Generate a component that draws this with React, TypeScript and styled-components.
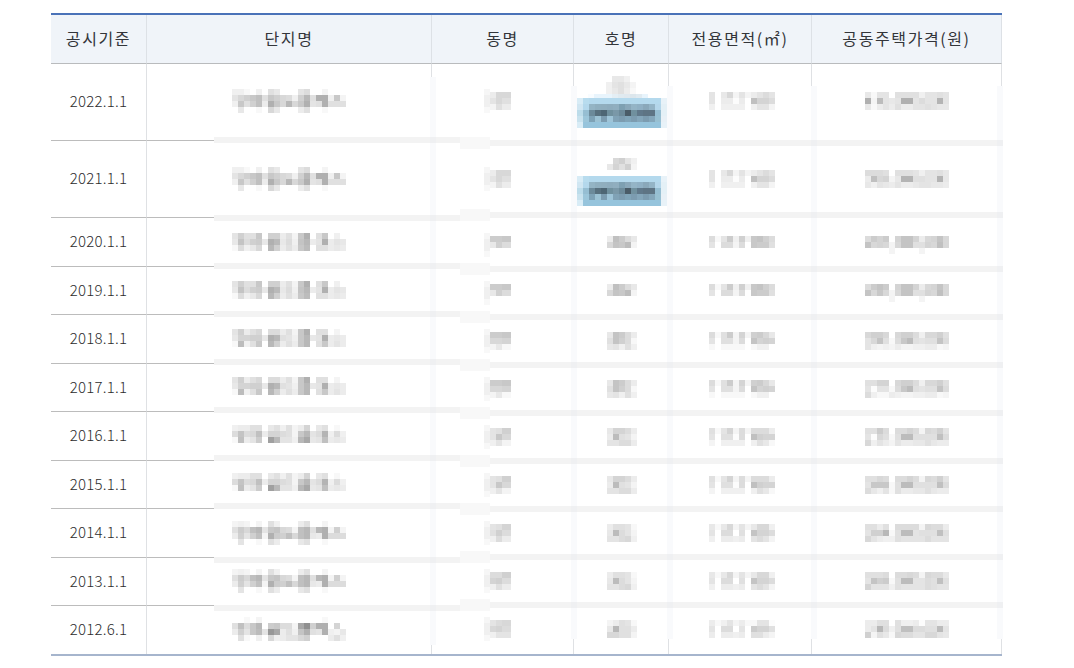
import React from "react";
import styled, { createGlobalStyle } from "styled-components";

const Global = createGlobalStyle`
  html, body { margin: 0; padding: 0; background: #fff; overflow: hidden; }
  body { font-family: "Noto Sans CJK KR", "Liberation Sans", sans-serif; }
`;

const Page = styled.div`
  position: relative;
  width: 1074px;
  height: 668px;
  padding: 13px 0 0 51px;
  box-sizing: border-box;
`;

const Table = styled.table`
  width: 951px;
  table-layout: fixed;
  border-collapse: separate;
  border-spacing: 0;
  border-top: 2px solid #4a72b8;
  border-bottom: 2px solid #a6b5cd;
`;

const HeadCell = styled.th`
  height: 49px;
  box-sizing: border-box;
  padding: 0 0 3px;
  background: #f0f4f9;
  border-right: 1px solid #dde1e6;
  border-bottom: 1px solid #b9bbbd;
  font-family: "Noto Sans CJK KR", sans-serif;
  font-size: 16px;
  font-weight: 400;
  letter-spacing: 1.6px;
  color: #33353a;
  text-align: center;
`;

const Row = styled.tr<{ $h: number }>`
  height: ${(p) => p.$h}px;
`;

const Cell = styled.td<{ $last: boolean }>`
  box-sizing: border-box;
  padding: 0 0 3px;
  border-right: 1px solid #dfe1e4;
  border-bottom: ${(p) => (p.$last ? "none" : "1px solid #bcbcbc")};
  text-align: center;
  font-family: "Noto Sans CJK KR", sans-serif;
  font-size: 15px;
  font-weight: 300;
  letter-spacing: 0.2px;
  color: #2c2c2c;
`;

const Redaction = styled.svg`
  position: absolute;
  left: 0;
  top: 0;
  pointer-events: none;
`;

const CELL = 6;

type Block = { x: number; y: number; w?: number; rows: string[] };

const toColor = (t: string) => (t.length === 2 ? `#${t}${t}${t}` : `#${t}`);

const Mosaic = ({ x, y, w, rows }: Block) => {
  const parsed = rows.map((r) => r.split(" "));
  const cols = Math.max(...parsed.map((r) => r.length));
  return (
    <svg x={x} y={y} width={w ?? cols * CELL} height={rows.length * CELL}>
      {parsed.flatMap((r, j) =>
        r.map((t, i) =>
          t === "." ? null : (
            <rect key={`${i}-${j}`} x={i * CELL} y={j * CELL} width={CELL} height={CELL} fill={toColor(t)} />
          )
        )
      )}
    </svg>
  );
};

const columns = [96, 285, 142, 95, 143, 190];
const headers = ["공시기준", "단지명", "동명", "호명", "전용면적(㎡)", "공동주택가격(원)"];
const dates: [string, number][] = [
  ["2022.1.1", 77],
  ["2021.1.1", 77],
  ["2020.1.1", 49],
  ["2019.1.1", 48],
  ["2018.1.1", 49],
  ["2017.1.1", 48],
  ["2016.1.1", 49],
  ["2015.1.1", 48],
  ["2014.1.1", 49],
  ["2013.1.1", 48],
  ["2012.6.1", 48],
];

const nameA = [
  "f0 f0 f8 . f0 . e0 e8 . . . e4 dc . . f4 . . .",
  "e4 d8 d0 c8 c0 e0 c8 d0 d8 dc f0 d0 b8 e0 b0 b0 f0 c8 f4",
  "f0 c8 e0 d0 c0 ec b0 c8 d8 b8 d8 c8 b0 e4 e0 b0 e0 e0 e0",
  ". e8 . . f8 . d8 e8 . . . ec e0 . . f8 . . .",
];
const nameB = [
  "e4 d0 e0 e0 c8 . d0 d0 ec e0 f4 c8 b0 . e0 c8 . f0 .",
  "e8 c4 dc d0 cc e8 b0 ba e8 dc f0 c4 b8 ec e4 b0 ec e4 e8",
  "f8 dc f0 e8 d8 . b8 d0 ec e0 ec c8 bc . e0 e0 ec e8 ec",
];
const nameC = [
  "e4 d0 ec e0 d8 . dc dc ec e0 f4 c8 b0 . e0 e0 . f4 .",
  "e8 d4 d4 d0 d0 e8 b0 b8 e0 e4 f0 c8 b8 e8 e4 b0 ec e8 ec",
  "f8 bc f0 e0 c8 . b8 d0 ec e0 ec c8 b8 . e0 c8 ec e4 ec",
];
const nameD = [
  "f0 ec ec e0 e0 . e8 e0 f0 e0 f4 ec d4 . e8 e0 . f8 .",
  "dc c4 dc d8 c0 ec d4 d4 dc e0 f4 c8 b8 e4 dc b4 f0 dc f0",
  "f8 c0 ec e4 cc . a0 b8 e4 e4 f0 b8 a8 e8 e4 c0 ec e8 ec",
];
const nameE = [
  "f4 f0 f4 . f4 . e0 f0 . . . ec e0 . . f4 . . .",
  "e0 cc d8 c0 b8 e4 c8 c4 d8 dc f4 c0 b8 e0 b8 b0 f4 d0 f4",
  "ec d0 e4 d0 c0 f4 b0 cc d0 c0 d8 c0 b8 e8 ec b0 dc dc dc",
  ". e4 . . f8 . e0 ec . . . e8 e0 . . f8 . . .",
];
const nameF = [
  ". . f8 . f4 . . . . . . . . . . f8 . . .",
  "e0 c0 dc c8 b8 . cc c8 dc dc f4 a8 90 d0 b0 b0 . d4 .",
  "ec d0 e4 c8 bc e4 98 a8 ec e0 f0 c4 b0 e0 e4 b0 f0 f4 e8",
  ". e0 f8 . f0 . d8 f0 ec e4 e4 d8 d0 . . . ec e0 f0",
];

const area1 = [
  "e4 . e8 d8 f4 e4 f4 ec e4 dc e4",
  "e4 . ec ec fc ec . c0 d4 d4 dc",
  "f0 . f0 f0 f0 f0 . f0 e4 e4 f4",
];
const area3 = ["dc f8 e4 cc f0 d0 f0 c8 c4 d0 dc", "e4 . dc dc f4 dc . c8 cc cc e0"];
const area5 = [
  "dc f8 e0 cc f4 d4 f4 d0 cc d8 e8",
  "e4 . e0 e0 f4 dc . c4 d4 d0 d4",
  "f8 . f8 f8 f8 f8 . f8 f0 f0 .",
];
const area7 = [
  "e0 f8 e4 d4 f4 dc f4 dc dc dc ec",
  "e4 . e0 e0 fc dc . c0 d0 d4 d4",
  "f4 . f0 f0 f0 f0 . f0 e0 e8 f8",
];
const area9 = [
  "e8 f8 e8 d8 f4 e4 f4 e8 d8 d8 f0",
  "e4 . dc dc . e0 . c4 d4 d4 dc",
  "f0 . ec ec f0 ec . e4 dc e4 f4",
];
const area11 = [
  "ec f8 f0 e4 f4 ec f8 f8 e4 e4 fc",
  "e4 . dc dc . e4 . cc d4 d4 e0",
  "ec . ec ec f0 ec . e0 e0 ec f4",
];

const ho3 = ["ec c0 cc dc e8", "d8 c4 c8 bc f4"];
const ho5 = ["e8 c4 cc dc ec", "e0 c4 d0 dc f8", "e8 e4 f0 e0 f0"];
const ho7 = ["e8 d4 d4 dc ec", "ec bc e0 e4 f4", "e4 e4 dc dc ec"];
const ho9 = ["ec e0 e0 e4 f8", "e8 bc dc e4 f4", "e4 e4 dc d8 f0"];
const ho11 = ["f4 ec e0 e4 f8", "e8 b8 e0 e0 ec", "d8 d8 e0 e0 f4"];

const blue = [
  "d8ecf6 b8dcee b4d9ed b4d9ed b4d9ed b4d9ed b4d9ed b4d9ed b4d9ed b4d9ed b4d9ed b4d9ed b4d9ed b4d9ed e8f2f8",
  "d0e6f2 b4d8ec 94b4c4 90afbf 90aebe 8eacbd 90aebf 7ea0b2 8aa8ba 94b4c6 90b0c4 8aa8ba 94b4c6 b4d6ea e4f0f6",
  "bcdcea 96bed2 6c8a9a 58707e 4e6674 70909e 7a98a8 6c8a9a 4a5c68 70909e 60788a 5e7484 5e7484 96bed2 e4f0f6",
  "c8e2ee 9cc6da 7ea2b6 9cc2d4 7c9cb0 9ec4d8 80a2b6 7c9cb0 80a4b8 7c9cb0 84a6ba 7c9cb0 84a6ba 98c0d2 e8f0f6",
  "d8ecf6 96c4dc 96c4dc 96c4dc 96c4dc 96c4dc 96c4dc 96c4dc 96c4dc 96c4dc 96c4dc 96c4dc 96c4dc 96c4dc e8f2f8",
];
const blueTop = [
  "f8fcff e8f4fc e8f4fc e8f4fc e4eef4 e0eaf0 e0e8ee dce6ec e0eaf0 e8f4fc",
];

const dongRows: [number, string[]][] = [
  [92, ["ec d8 d8 d8", "e4 d8 e0 e0", "f4 e0 ec ec"]],
  [170, ["ec d8 d8 d8", "e4 d8 e0 e0", "f4 e0 ec ec"]],
  [236, ["cc cc c8 c8", "e8 d0 dc dc"]],
  [284, ["cc cc c8 c8", "e8 d0 dc dc"]],
  [332, ["cc cc c8 c8", "d8 d8 d4 d4", "f4 e8 f8 f8"]],
  [380, ["cc cc c8 c8", "d8 d8 d4 d4", "f4 e8 f8 f8"]],
  [428, ["e4 e0 d0 d0", "e4 c8 d8 d8", "f0 e4 f4 f4"]],
  [476, ["e4 e0 d0 d0", "e4 c8 d8 d8", "f0 e4 f4 f4"]],
  [524, ["e4 e0 d4 d4", "e0 d0 dc dc", "f0 dc ec ec"]],
  [572, ["dc dc d0 d0", "d4 d0 dc dc", "f0 e0 ec ec"]],
  [620, ["e4 dc d8 d8", "d8 d4 dc dc", "f0 e4 e4 e4"]],
];

const blocks: Block[] = [
  { x: 232, y: 89, rows: nameA },
  { x: 232, y: 167, rows: nameA },
  { x: 232, y: 233, rows: nameB },
  { x: 232, y: 281, rows: nameB },
  { x: 232, y: 329, rows: nameC },
  { x: 232, y: 377, rows: nameC },
  { x: 232, y: 425, rows: nameD },
  { x: 232, y: 473, rows: nameD },
  { x: 232, y: 521, rows: nameE },
  { x: 232, y: 569, rows: nameE },
  { x: 232, y: 617, rows: nameF },

  ...dongRows.flatMap(([y, rows]): Block[] => [
    { x: 484, y: y - 3, rows: ["f6", "f0", "f0", "f8"] },
    { x: 490, y, w: 21, rows },
  ]),

  { x: 709, y: 92, rows: area1 },
  { x: 709, y: 170, rows: area1 },
  { x: 709, y: 236, rows: area3 },
  { x: 709, y: 284, rows: area3 },
  { x: 709, y: 332, rows: area5 },
  { x: 709, y: 380, rows: area5 },
  { x: 709, y: 428, rows: area7 },
  { x: 709, y: 476, rows: area7 },
  { x: 709, y: 524, rows: area9 },
  { x: 709, y: 572, rows: area9 },
  { x: 709, y: 620, rows: area11 },

  { x: 865, y: 92, rows: ["e8 f8 e4 e4 . e0 e0 e0 e0 f0 e4 e4 e0 e4", "b0 f4 bc e4 e8 e4 b0 b0 e4 dc e4 e4 b4 e4", "e8 f8 ec e4 ec e0 ec ec e4 e4 e0 e4 e8 e8"] },
  { x: 865, y: 170, rows: ["dc dc dc e0 . e0 e0 e0 e4 f0 e4 e4 e0 e8", "ec c0 d8 d4 f4 e8 b4 b4 e0 e0 e4 e4 b4 e8", "e8 f0 e4 e8 ec e4 ec ec e8 e4 e4 e8 e8 ec"] },
  { x: 865, y: 236, rows: ["dc cc d4 cc . d4 c4 c4 d4 ec d8 d4 c4 d8", "c4 d8 d4 d8 f4 d8 c4 c4 e0 e0 d4 d8 c0 d8", ". . . . f4 . . . . f4 . . . ."] },
  { x: 865, y: 284, rows: ["dc cc c4 cc . d4 c4 c4 d4 ec d8 d4 c4 d8", "c4 d8 c8 d8 f4 d8 c4 c4 e0 e0 d4 d8 c0 d8", ". . . . f4 . . . . f4 . . . ."] },
  { x: 865, y: 332, rows: ["d8 d0 d0 d8 . d8 d0 d0 dc f0 d8 d8 d0 e0", "e4 d8 c4 e0 f8 dc c8 bc e0 e4 e0 e0 c4 dc", "e4 f0 f4 f0 f4 ec f4 f4 f0 f0 ec ec f8 f4"] },
  { x: 865, y: 380, rows: ["e0 e0 d4 d4 . d8 d0 d0 dc f0 d8 d8 d0 e0", "e4 fc e4 e4 f8 dc c8 bc e0 e4 e0 e0 c4 dc", "dc f0 f8 f8 ec f0 f4 f4 f0 f0 ec ec f8 f4"] },
  { x: 865, y: 428, rows: ["e0 e0 cc dc . dc dc d4 dc f4 d8 dc d0 e4", "e4 fc d8 e0 f8 e0 bc bc e0 e0 e0 e0 c0 dc", "d8 f0 e4 ec f4 e4 ec ec e8 e8 e0 e8 ec ec"] },
  { x: 865, y: 476, rows: ["e0 e0 d8 dc . dc dc d4 dc f4 d8 dc d0 e4", "e4 c8 c8 c8 f8 e0 bc bc e0 e0 e0 e0 c0 dc", "dc e8 f0 e4 f8 e0 ec ec e8 e8 e0 e8 ec ec"] },
  { x: 865, y: 524, rows: ["e0 e0 ec e0 . dc dc dc dc f4 d8 dc dc ec", "e4 d0 d0 b8 f8 e0 bc bc e4 e0 e0 e0 c0 e0", "d8 e4 ec f0 f0 e0 e4 e4 e4 e4 dc e4 e4 e4"] },
  { x: 865, y: 572, rows: ["e0 e0 e0 dc . dc dc d8 dc f4 d8 dc dc e8", "e4 c4 d0 cc f8 e0 bc bc e4 e4 dc e0 c0 e0", "d4 e4 e4 e4 f0 e0 e4 e4 e4 e4 dc e0 e4 e4"] },
  { x: 865, y: 620, rows: ["ec ec e0 e0 . e0 f0 f0 ec fc e4 e4 ec ec", "ec e4 b8 dc f0 e0 c0 c0 dc dc e0 e0 bc e4", "d0 f4 e0 e8 f8 d8 dc dc e4 e4 d8 d8 e4 e8"] },

  { x: 607, y: 236, rows: ho3 },
  { x: 607, y: 284, rows: ho3 },
  { x: 607, y: 332, rows: ho5 },
  { x: 607, y: 380, rows: ho5 },
  { x: 607, y: 428, rows: ho7 },
  { x: 607, y: 476, rows: ho7 },
  { x: 607, y: 524, rows: ho9 },
  { x: 607, y: 572, rows: ho9 },
  { x: 607, y: 620, rows: ho11 },
];

const leftBands = [137, 215, 263, 311, 359, 407, 455, 503, 557, 605];
const rightBands = [140, 212, 266, 314, 362, 410, 458, 506, 554, 602];
const verticals: [number, number, number][] = [
  [430, 77, 645],
  [571, 86, 639],
  [667, 86, 639],
  [811, 86, 639],
  [997, 86, 639],
];

const GridVeil = () => (
  <>
    {verticals.map(([x, y1, y2]) => (
      <rect key={x} x={x} y={y1} width={6} height={y2 - y1} fill="#f9fafc" />
    ))}
    {leftBands.map((y) => (
      <rect key={`l${y}`} x={214} y={y} width={246} height={6} fill="#f3f3f3" />
    ))}
    {leftBands.map((y) => (
      <rect key={`c${y}`} x={430} y={y} width={6} height={6} fill="#eff0f2" />
    ))}
    {rightBands.map((y) => (
      <rect key={`p${y}`} x={460} y={y - 3} width={30} height={12} fill="#f8f8f8" />
    ))}
    {rightBands.map((y) => (
      <rect key={`r${y}`} x={490} y={y} width={513} height={6} fill="#f3f3f3" />
    ))}
    {rightBands.flatMap((y) =>
      verticals.slice(1).map(([x]) => <rect key={`x${x}-${y}`} x={x} y={y} width={6} height={6} fill="#eff0f2" />)
    )}
  </>
);

const HoHighlights = () => (
  <>
    <Mosaic x={606} y={76} rows={[". e8 e8 f0 .", "f0 e4 e0 e8 f4", "f0 e8 e0 ec f8"]} />
    <Mosaic x={588} y={94} w={60} rows={blueTop} />
    <Mosaic x={577} y={98} rows={blue} />
    <Mosaic x={607} y={158} rows={[". d8 d0 e4 f0", "e8 d4 e0 d0 f4"]} />
    <Mosaic x={577} y={176} rows={blue} />
  </>
);

export default function App() {
  return (
    <Page>
      <Global />
      <Table>
        <colgroup>
          {columns.map((w, i) => (
            <col key={i} style={{ width: w }} />
          ))}
        </colgroup>
        <thead>
          <tr>
            {headers.map((h) => (
              <HeadCell key={h}>{h}</HeadCell>
            ))}
          </tr>
        </thead>
        <tbody>
          {dates.map(([d, h], i) => (
            <Row key={d} $h={h}>
              <Cell $last={i === dates.length - 1}>{d}</Cell>
              {columns.slice(1).map((_, c) => (
                <Cell key={c} $last={i === dates.length - 1} />
              ))}
            </Row>
          ))}
        </tbody>
      </Table>
      <Redaction width={1074} height={668} aria-hidden="true">
        <GridVeil />
        {blocks.map((b) => (
          <Mosaic key={`${b.x}-${b.y}`} {...b} />
        ))}
        <HoHighlights />
      </Redaction>
    </Page>
  );
}
